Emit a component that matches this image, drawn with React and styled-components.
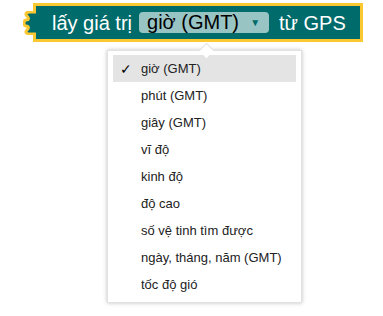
import React from 'react';
import styled, { createGlobalStyle } from 'styled-components';

const GlobalStyle = createGlobalStyle`
  body {
    margin: 0;
    background: #ffffff;
    font-family: "Liberation Sans", Arial, sans-serif;
  }
`;

const Page = styled.div`
  width: 383px;
  height: 316px;
  padding: 3px 0 0 33px;
  box-sizing: border-box;
  display: flex;
  flex-direction: column;
`;

const Block = styled.div`
  position: relative;
  width: 330px;
  height: 39px;
  box-sizing: border-box;
  border: 3px solid #fcc832;
  background: #006b6b;
  display: flex;
  align-items: center;
  padding-left: 16px;
  gap: 7px;
`;

const Tab = styled.svg`
  position: absolute;
  left: -13px;
  top: 5px;
`;

const Label = styled.span`
  color: #ffffff;
  font-size: 20px;
  line-height: 1;
`;

const Field = styled.div`
  display: flex;
  align-items: center;
  height: 21px;
  width: 130px;
  box-sizing: border-box;
  background: #99c4c4;
  border-radius: 4px;
  padding: 0 9px 0 8px;
  justify-content: space-between;
  color: #000000;
  font-size: 20px;
  margin-right: 3px;
`;

const Arrow = styled.span`
  color: #006b6b;
  font-size: 10px;
`;

const Menu = styled.div`
  position: relative;
  margin: 8px 0 0 74px;
  width: 195px;
  box-sizing: border-box;
  background: #ffffff;
  border: 1px solid #e2e2e2;
  box-shadow: 0 0 4px rgba(0, 0, 0, 0.25);
  padding: 4px 5px;
`;

const Pointer = styled.div`
  position: absolute;
  top: -6px;
  left: 93px;
  width: 10px;
  height: 10px;
  background: #ffffff;
  transform: rotate(45deg);
  border-left: 1px solid #e2e2e2;
  border-top: 1px solid #e2e2e2;
`;

const Item = styled.div`
  height: 27px;
  display: flex;
  align-items: center;
  font-size: 13px;
  color: #222222;
  background: ${(p) => (p.$selected ? '#e4e4e4' : 'transparent')};
`;

const Check = styled.span`
  width: 28px;
  padding-left: 7px;
  box-sizing: border-box;
  font-size: 14px;
  color: #000;
`;

const options = [
  'giờ (GMT)',
  'phút (GMT)',
  'giây (GMT)',
  'vĩ độ',
  'kinh độ',
  'độ cao',
  'số vệ tinh tìm được',
  'ngày, tháng, năm (GMT)',
  'tốc độ gió',
];

export default function App() {
  return (
    <>
      <GlobalStyle />
      <Page>
        <Block>
          <Tab width="14" height="24" viewBox="0 0 14 24">
            <path
              d="M13 1 H7 C3 1 2 3 4 5 C6 7 6 9 3 9 C1 9 1 11 1 12 C1 13 1 15 3 15 C6 15 6 17 4 19 C2 21 3 23 7 23 H13"
              fill="#006b6b"
              stroke="#fcc832"
              strokeWidth="3"
            />
          </Tab>
          <Label>lấy giá trị</Label>
          <Field>
            <span>giờ (GMT)</span>
            <Arrow>▼</Arrow>
          </Field>
          <Label>từ GPS</Label>
        </Block>
        <Menu>
          <Pointer />
          {options.map((o, i) => (
            <Item key={o} $selected={i === 0}>
              <Check>{i === 0 ? '✓' : ''}</Check>
              {o}
            </Item>
          ))}
        </Menu>
      </Page>
    </>
  );
}
